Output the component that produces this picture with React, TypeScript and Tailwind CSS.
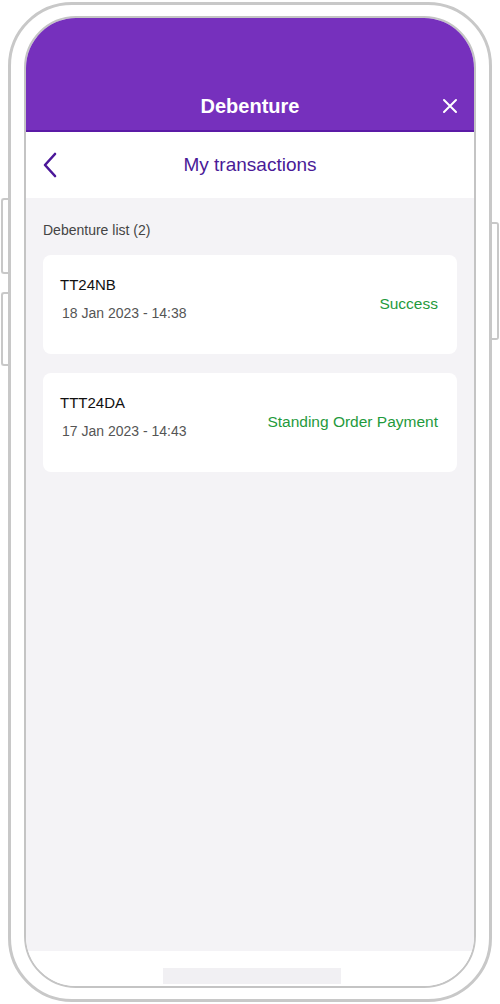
import React from 'react';

type Transaction = {
  id: string;
  date: string;
  status: string;
};

const transactions: Transaction[] = [
  { id: 'TT24NB', date: '18 Jan 2023 - 14:38', status: 'Success' },
  { id: 'TTT24DA', date: '17 Jan 2023 - 14:43', status: 'Standing Order Payment' },
];

const TransactionCard: React.FC<{ item: Transaction }> = ({ item }) => (
  <div className="flex h-[99px] items-center justify-between rounded-[8px] bg-white pl-[17px] pr-[19px]">
    <div className="flex flex-col self-start pt-[20px]">
      <span className="text-[15px] leading-[20px] text-[#111]">{item.id}</span>
      <span className="mt-[8px] pl-[2px] text-[14px] leading-[20px] text-[#555]">{item.date}</span>
    </div>
    <span className="mb-[2px] text-[15.5px] leading-[20px] text-[#1f9a3c]">{item.status}</span>
  </div>
);

export default function App() {
  return (
    <div className="relative h-[1004px] w-[500px] overflow-hidden bg-white pl-[8px] pt-[2px] font-['Liberation_Sans',Arial,sans-serif]">
      {/* side buttons */}
      <div className="absolute left-[1px] top-[198px] h-[76px] w-[10px] rounded-l-[3px] border-y-2 border-l-2 border-[#c8c8c8] bg-white" />
      <div className="absolute left-[1px] top-[292px] h-[74px] w-[10px] rounded-l-[3px] border-y-2 border-l-2 border-[#c8c8c8] bg-white" />
      <div className="absolute right-[1px] top-[222px] h-[118px] w-[10px] rounded-r-[3px] border-y-2 border-r-2 border-[#c8c8c8] bg-white" />

      {/* phone frame */}
      <div className="relative h-[1000px] w-[484px] rounded-[64px] border-[3px] border-[#c8c8c8] bg-white px-[13px] py-[11px]">
        <div className="flex h-full flex-col overflow-hidden rounded-[52px] border-2 border-[#c4c4c4] bg-white">
          {/* top bar */}
          <div className="relative flex h-[114px] shrink-0 items-end justify-center border-b-2 border-[#5b1aa6] bg-[#7630bd] pb-[12px]">
            <span className="text-[20px] font-bold leading-[24px] text-white">Debenture</span>
            <svg
              className="absolute bottom-[16px] right-[16px]"
              width="16"
              height="16"
              viewBox="0 0 16 16"
              fill="none"
              stroke="white"
              strokeWidth="2"
              strokeLinecap="round"
            >
              <path d="M2 2L14 14M14 2L2 14" />
            </svg>
          </div>

          {/* sub header */}
          <div className="relative flex h-[66px] shrink-0 items-center justify-center bg-white">
            <svg
              className="absolute left-[16px] top-[20px]"
              width="16"
              height="26"
              viewBox="0 0 16 26"
              fill="none"
              stroke="#4b1799"
              strokeWidth="2.6"
              strokeLinecap="round"
              strokeLinejoin="round"
            >
              <path d="M13 2L3 13L13 24" />
            </svg>
            <span className="text-[19px] leading-[24px] text-[#4a1a97]">My transactions</span>
          </div>

          {/* content */}
          <div className="flex flex-1 flex-col bg-[#f4f3f6] px-[17px] pt-[22px]">
            <span className="text-[14px] leading-[20px] text-[#444]">Debenture list (2)</span>
            <div className="mt-[15px] flex flex-col gap-[19px]">
              {transactions.map((t) => (
                <TransactionCard key={t.id} item={t} />
              ))}
            </div>
          </div>

          {/* home indicator */}
          <div className="flex h-[35px] shrink-0 items-start justify-center bg-white pl-[4px] pt-[17px]">
            <div className="h-[16px] w-[178px] bg-[#f1f0f3]" />
          </div>
        </div>
      </div>
    </div>
  );
}
